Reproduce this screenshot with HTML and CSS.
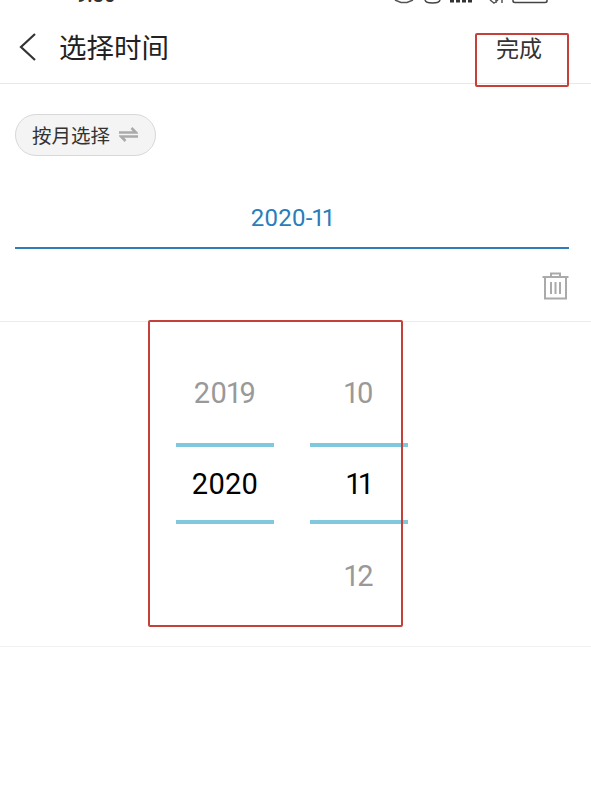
FILE: index.html
```html
<!DOCTYPE html>
<html lang="zh">
<head>
    <meta charset="UTF-8">
    <meta content="width=device-width, initial-scale=1.0" name="viewport">
    <title>选择时间</title>
    <link rel="stylesheet" href="styles.css">
</head>
<body>
<div class="status-bar">
    <div class="status-time">9:35</div>
    <svg class="status-icons" width="160" height="8" viewBox="0 0 160 8">
        <path d="M2 0 L8 2.500 L14 2.500 L20 0" fill="none" stroke="#555" stroke-width="1.500"/>
        <path d="M32 0 C33 4 46 4 47 0" fill="none" stroke="#444" stroke-width="1.500"/>
        <rect x="57" y="0" width="4" height="2.500" fill="#333"/>
        <rect x="63" y="0" width="4" height="2.500" fill="#333"/>
        <rect x="69" y="0" width="4" height="2.500" fill="#333"/>
        <rect x="75" y="0" width="4" height="2.500" fill="#333"/>
        <path d="M97 0 L101 3 L105 0 M103 0 V3 M109 0 V3" fill="none" stroke="#555" stroke-width="1.500"/>
        <path d="M120 0 V1 C120 2 121 2.500 122 2.500 H152 C153 2.500 154 2 154 1 V0" fill="none" stroke="#444" stroke-width="1.500"/>
    </svg>
</div>

<header class="top-bar">
    <svg class="back-icon" width="20" height="30" viewBox="0 0 20 30">
        <path d="M18 2 L4 15 L18 28" fill="none" stroke="#333" stroke-width="2.200"/>
    </svg>
    <h1 class="page-title">选择时间</h1>
    <div class="done-button">完成</div>
</header>

<section class="mode-section">
    <div class="mode-pill">
        <span>按月选择</span>
        <svg width="19" height="15" viewBox="0 0 19 15">
            <path d="M0 5.500 H17 L12.500 1 M19 9.500 H2 L6.500 14" fill="none" stroke="#aaa" stroke-width="2.500"/>
        </svg>
    </div>
</section>

<section class="date-section">
    <div class="date-value">2020-11</div>
    <div class="trash-row">
        <svg width="27" height="28" viewBox="0 0 27 28">
            <path d="M0.500 5 H26.500 M9 5 V1.500 H18 V5 M3 5 V26.500 H24 V5 M9 10 V22 M13.500 10 V22 M18 10 V22" fill="none" stroke="#aaa" stroke-width="2"/>
        </svg>
    </div>
</section>

<section class="picker">
    <div class="picker-col">
        <div class="picker-item">2019</div>
        <div class="picker-item selected">2020</div>
        <div class="picker-item"></div>
    </div>
    <div class="picker-col">
        <div class="picker-item">10</div>
        <div class="picker-item selected">11</div>
        <div class="picker-item">12</div>
    </div>
</section>

<div class="mark mark-done"></div>
<div class="mark mark-picker"></div>
</body>
</html>
```

FILE: styles.css
```css
* {
    box-sizing: border-box;
    margin: 0;
    padding: 0;
}

body {
    font-family: "Noto Sans CJK SC", "Roboto", sans-serif;
    background-color: #fff;
    height: 788px;
    overflow: hidden;
    position: relative;
}

.status-bar {
    height: 8px;
    display: flex;
    justify-content: space-between;
    padding: 0 38px 0 76px;
    overflow: hidden;
}

.status-time {
    font-family: "Roboto", sans-serif;
    font-size: 20px;
    font-weight: 500;
    line-height: 8px;
    margin-top: -9px;
    color: #333;
}

.status-icons {
    display: block;
}

.top-bar {
    height: 76px;
    display: flex;
    align-items: flex-start;
    border-bottom: 1px solid #e8e8e8;
    padding-left: 17px;
}

.back-icon {
    margin-top: 24px;
}

.page-title {
    font-size: 27.500px;
    font-weight: 400;
    line-height: 40px;
    color: #222;
    margin-top: 18px;
    margin-left: 22px;
}

.done-button {
    font-size: 23px;
    line-height: 34px;
    color: #333;
    margin-left: auto;
    margin-right: 49px;
    margin-top: 22px;
}

.mode-section {
    padding: 30px 0 0 15px;
}

.mode-pill {
    width: 141px;
    height: 42px;
    border: 1px solid #d8d8d8;
    border-radius: 21px;
    background-color: #f4f4f4;
    display: flex;
    align-items: center;
    gap: 9px;
    padding-left: 16px;
    padding-bottom: 1px;
    font-size: 19.500px;
    color: #333;
}

.date-section {
    height: 166px;
    border-bottom: 1px solid #ececec;
    padding: 0 22px 0 15px;
}

.date-value {
    height: 93px;
    padding-top: 47px;
    line-height: 30px;
    font-family: "Roboto", sans-serif;
    font-size: 24px;
    font-variant-numeric: proportional-nums;
    color: #2b7cba;
    text-align: center;
    border-bottom: 2px solid #2f7db8;
}

.trash-row {
    display: flex;
    justify-content: flex-end;
    padding-top: 23px;
}

.picker {
    height: 325px;
    border-bottom: 1px solid #f0f0f0;
    display: flex;
    gap: 36px;
    padding: 25px 0 0 176px;
}

.picker-col {
    width: 98px;
}

.picker-item {
    height: 92px;
    line-height: 92px;
    text-align: center;
    font-family: "Roboto", sans-serif;
    font-size: 29px;
    font-variant-numeric: proportional-nums;
    color: #999;
}

.picker-item.selected {
    height: 81px;
    line-height: 75px;
    margin: 4px 0 6px;
    color: #000;
    border-top: 4px solid #7fc8de;
    border-bottom: 4px solid #7fc8de;
}

.mark {
    position: absolute;
    border: 2px solid #c6403a;
    border-radius: 2px;
}

.mark-done {
    left: 475px;
    top: 33px;
    width: 94px;
    height: 54px;
}

.mark-picker {
    left: 148px;
    top: 320px;
    width: 255px;
    height: 307px;
}
```
